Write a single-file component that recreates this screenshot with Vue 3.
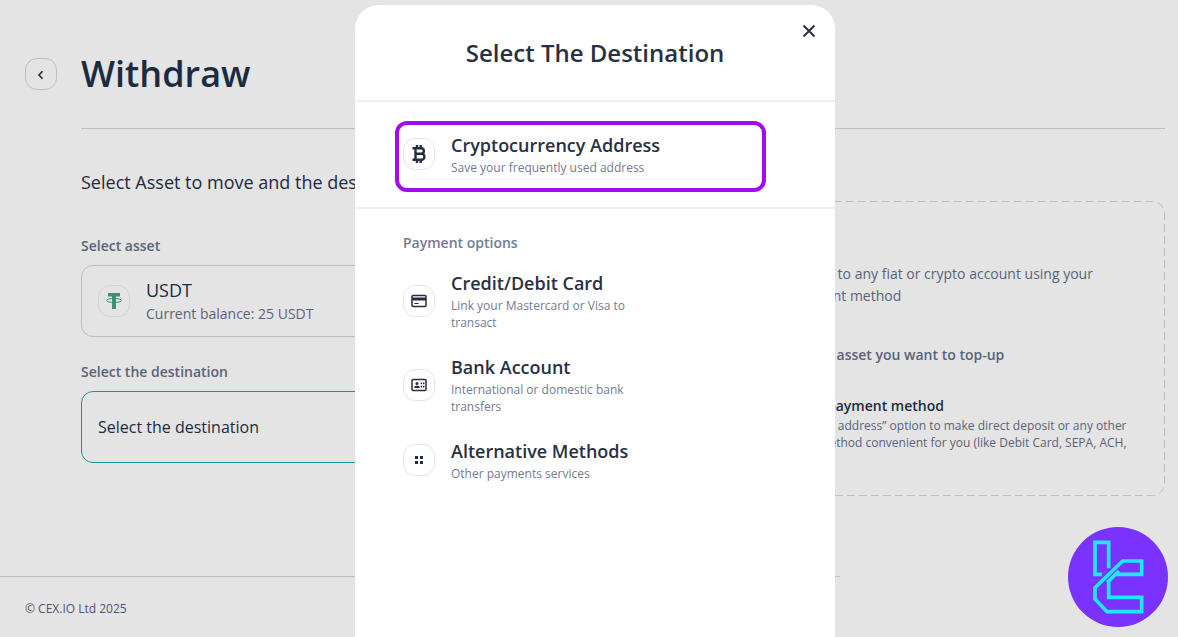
<script setup>
const options = [
  { icon: 'card', title: 'Credit/Debit Card', text: 'Link your Mastercard or Visa to transact' },
  { icon: 'bank', title: 'Bank Account', text: 'International or domestic bank transfers' },
  { icon: 'grid', title: 'Alternative Methods', text: 'Other payments services' },
]
</script>

<template>
  <div class="page">
    <main class="main">
      <button class="tile back" type="button" aria-label="Back">
        <svg width="16" height="16" viewBox="0 0 16 16"><path d="M9.500 5.300 6 9l3.500 3.700" fill="none" stroke="#1c2b40" stroke-width="1.600" /></svg>
      </button>
      <div class="content">
        <header class="head"><h1>Withdraw</h1></header>
        <div class="columns">
          <section class="form">
            <p class="intro">Select Asset to move and the destination</p>
            <label class="label" for="asset">Select asset</label>
            <button id="asset" class="field" type="button">
              <span class="tile coin">
                <svg width="18" height="18" viewBox="0 0 18 18">
                  <path d="M3 1h12v3.500H11V17H7V4.500H3z" fill="#3f8f75" />
                  <ellipse cx="9" cy="8.500" rx="7.500" ry="2" fill="none" stroke="#3f8f75" />
                </svg>
              </span>
              <span class="asset">
                <span class="asset-name">USDT</span>
                <span class="asset-balance">Current balance: 25 USDT</span>
              </span>
            </button>
            <label class="label" for="destination">Select the destination</label>
            <button id="destination" class="field active" type="button">Select the destination</button>
          </section>
          <aside class="guide">
            <svg class="dashes" aria-hidden="true"><rect class="dash-rect" x="0.5" y="0.5" rx="12" /></svg>
            <p class="guide-lead">Send assets to any fiat or crypto account using your own payment method</p>
            <h2 class="guide-step">Choose the asset you want to top-up</h2>
            <h2 class="guide-step dark">Select the payment method</h2>
            <p class="guide-note">Select “Crypto address” option to make direct deposit or any other supported method convenient for you (like Debit Card, SEPA, ACH,</p>
          </aside>
        </div>
      </div>
    </main>
    <footer class="footer">© CEX.IO Ltd 2025</footer>

    <div class="overlay">
      <div class="modal" role="dialog" aria-modal="true" aria-labelledby="modal-title">
        <header class="modal-head">
          <h2 id="modal-title">Select The Destination</h2>
          <button class="close" type="button" aria-label="Close">
            <svg width="16" height="16" viewBox="0 0 16 16"><path d="M2.500 2.500l11 11M13.500 2.500l-11 11" stroke="#283044" stroke-width="2" /></svg>
          </button>
        </header>
        <section class="crypto">
          <button class="option highlighted" type="button">
            <span class="tile">
              <svg width="18" height="20" viewBox="0 0 18 20">
                <path d="M2.500 4.300h8.500a2.600 2.600 0 0 1 .4 5.300 3 3 0 0 1 0 6.100H2.500M5.500 4.300v11.400M5.500 9.800h6M7 1v3M10.700 1v3M7 16v3M10.700 16v3" fill="none" stroke="#252d40" stroke-width="2.400" />
              </svg>
            </span>
            <span class="option-body">
              <span class="option-title">Cryptocurrency Address</span>
              <span class="option-text">Save your frequently used address</span>
            </span>
          </button>
        </section>
        <section class="payments">
          <h3>Payment options</h3>
          <button v-for="o in options" :key="o.title" class="option" type="button">
            <span class="tile">
              <svg v-if="o.icon === 'card'" width="16" height="14" viewBox="0 0 16 14">
                <rect x="1" y="1.500" width="14" height="11" rx="1" fill="none" stroke="#252d40" stroke-width="1.500" />
                <path d="M1 3.500h14v3H1z" fill="#252d40" />
                <path d="M3.500 9.500h4" stroke="#252d40" />
              </svg>
              <svg v-else-if="o.icon === 'bank'" width="16" height="14" viewBox="0 0 16 14">
                <rect x="1" y="1.500" width="14" height="11" rx="1" fill="none" stroke="#252d40" stroke-width="1.500" />
                <circle cx="6" cy="5.500" r="1.500" fill="#252d40" />
                <path d="M3.300 10V9.300C3.300 8.200 5 7.800 6 7.800s2.700.4 2.700 1.500V10zM9.700 4.500h1.400v1.800H9.700zM12 4.500h1.400v1.800H12zM9.700 7.800h1.400v1.700H9.700zM12 7.800h1.400v1.700H12z" fill="#252d40" />
              </svg>
              <svg v-else width="8" height="8" viewBox="0 0 8 8"><path d="M0 0h3v3H0zM5 0h3v3H5zM0 5h3v3H0zM5 5h3v3H5z" fill="#252d40" /></svg>
            </span>
            <span class="option-body">
              <span class="option-title">{{ o.title }}</span>
              <span class="option-text">{{ o.text }}</span>
            </span>
          </button>
        </section>
      </div>
    </div>

    <svg class="badge" viewBox="30 30 300 300" aria-hidden="true">
      <circle cx="180" cy="180" r="150" fill="#7a33fe" />
      <g fill="none" stroke="#1ee8ff" stroke-width="11">
        <path d="M132 172H111V76H152V154" />
        <path d="M173 172H251V132H194L111 212V246L147 284H251V241H152V190" />
        <path d="M183 162L148 196" />
      </g>
    </svg>
  </div>
</template>

<style>
body {
  background: #e4e4e4;
}
</style>

<style scoped>
.page {
  position: relative;
  min-height: 100vh;
  overflow: hidden;
  font-family: "Open Sans", "Noto Sans", sans-serif;
  color: #1c2b40;
}
h1, h2, h3, p {
  margin: 0;
}
button {
  font-family: inherit;
  color: inherit;
  text-align: left;
  background: none;
  border: 0;
  padding: 0;
}
.main {
  display: flex;
  gap: 24px;
  padding: 0 13px 0 25px;
}
.tile {
  flex: none;
  display: flex;
  align-items: center;
  justify-content: center;
  box-sizing: border-box;
  width: 32px;
  height: 32px;
  border: 1px solid #e4e5e9;
  border-radius: 12px;
}
.back {
  margin-top: 58px;
  border-color: #bebfc1;
}
.content {
  flex: 1;
}
.head {
  padding: 46px 0 26px;
  border-bottom: 1px solid #bdbebf;
}
h1 {
  font-size: 36px;
  line-height: 56px;
  font-weight: 600;
}
.columns {
  display: grid;
  grid-template-columns: minmax(0, 1fr) 440px;
  gap: 40px;
  align-items: start;
}
.form {
  display: flex;
  flex-direction: column;
  padding-top: 40px;
}
.intro {
  font-size: 18px;
  line-height: 26px;
  margin-bottom: 40px;
}
.label {
  font-size: 14px;
  line-height: 22px;
  font-weight: 600;
  color: #58637b;
  margin-bottom: 8px;
}
.field {
  display: flex;
  align-items: center;
  gap: 16px;
  box-sizing: border-box;
  height: 72px;
  padding: 0 16px;
  border: 1px solid #bdbebf;
  border-radius: 12px;
  margin-bottom: 24px;
  font-size: 16px;
}
.active {
  border-color: #1d9297;
}
.coin {
  border-color: #d2d3d4;
}
.asset {
  display: flex;
  flex-direction: column;
}
.asset-name {
  font-size: 18px;
  line-height: 26px;
}
.asset-balance {
  font-size: 14px;
  line-height: 22px;
  color: #58637b;
}
.guide {
  position: relative;
  margin-top: 72px;
  padding: 62px 32px 45px;
  color: #58637b;
}
.dashes {
  position: absolute;
  inset: 0;
  width: 100%;
  height: 100%;
}
.dash-rect {
  width: calc(100% - 1px);
  height: calc(100% - 1px);
  fill: none;
  stroke: #bdbebf;
  stroke-dasharray: 8 4;
}
.guide-lead {
  padding-right: 24px;
  font-size: 14px;
  line-height: 22px;
  margin-bottom: 37px;
}
.guide-step {
  font-size: 14px;
  line-height: 22px;
  font-weight: 600;
  margin-bottom: 29px;
}
.guide-step.dark {
  color: #1c2b40;
  margin-bottom: 0;
}
.guide-note {
  font-size: 12px;
  line-height: 17px;
}
.footer {
  box-sizing: border-box;
  max-width: 840px;
  margin-top: 80px;
  padding: 23px 25px 19px;
  border-top: 1px solid #bdbebf;
  font-size: 12px;
  line-height: 18px;
  color: #4a566c;
}
.overlay {
  position: absolute;
  inset: 0;
  display: flex;
  justify-content: center;
  padding: 5px 0 0 12px;
}
.modal {
  width: 480px;
  background: #fff;
  border-radius: 24px 24px 0 0;
  color: #283044;
}
.modal-head {
  position: relative;
  padding: 32px 40px 31px;
  border-bottom: 2px solid #f0f0f1;
  text-align: center;
}
.modal-head h2 {
  font-size: 24px;
  line-height: 32px;
  font-weight: 600;
}
.close {
  position: absolute;
  top: 18px;
  right: 18px;
  display: flex;
}
.crypto {
  padding: 19px 69px 15px 40px;
  border-bottom: 2px solid #f0f0f1;
}
.option {
  display: flex;
  align-items: center;
  gap: 16px;
  width: 100%;
}
.highlighted {
  padding: 7px 4px 12px;
  border: 4px solid #a30bee;
  border-radius: 12px;
}
.option-body {
  display: flex;
  flex-direction: column;
  gap: 1px;
}
.option-title {
  font-size: 18px;
  line-height: 26px;
  font-weight: 600;
}
.option-text {
  max-width: 200px;
  font-size: 12px;
  line-height: 17px;
  color: #727b94;
}
.payments {
  display: flex;
  flex-direction: column;
  gap: 23px;
  padding: 24px 48px;
}
h3 {
  font-size: 14px;
  line-height: 20px;
  font-weight: 600;
  color: #727b94;
  margin-bottom: -6px;
}
.badge {
  position: absolute;
  right: 10px;
  bottom: 10px;
  width: 100px;
  height: 100px;
}
</style>
